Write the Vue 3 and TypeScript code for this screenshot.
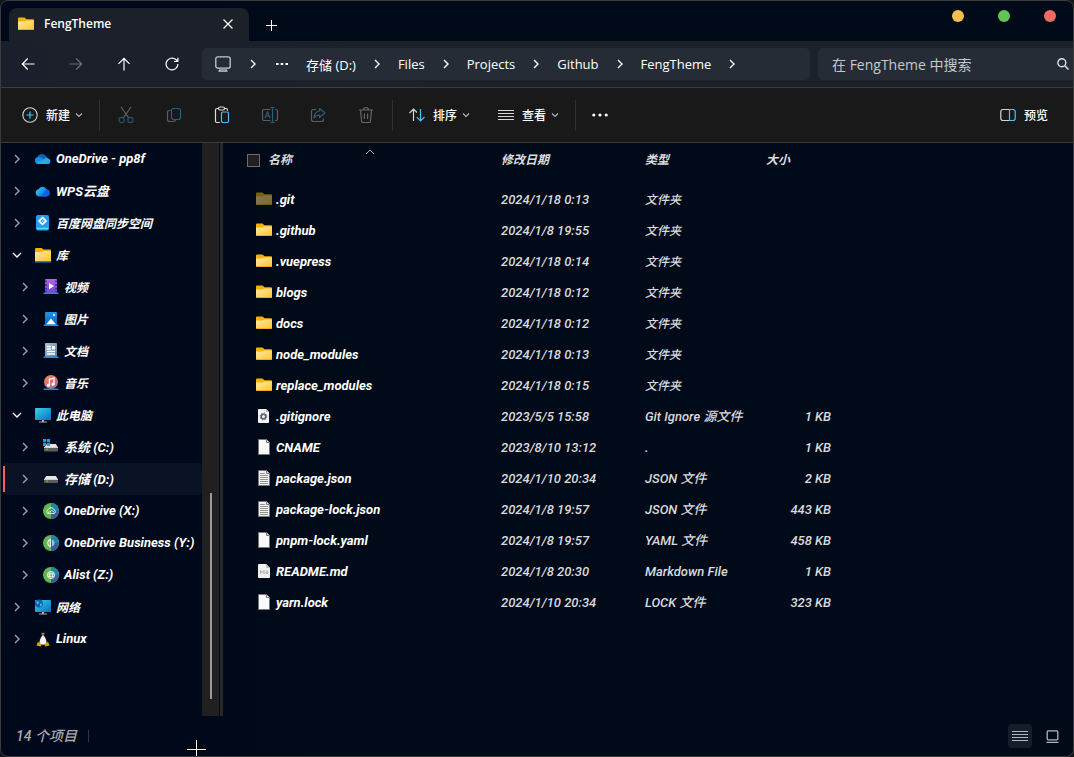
<script setup lang="ts">
import { ref } from 'vue'

interface TreeItem {
  label: string
  icon: string
  level: 0 | 1
  open?: boolean
}

interface FileItem {
  name: string
  icon: string
  date: string
  type: string
  size: string
  hidden?: boolean
}

const crumbs = ['存储 (D:)', 'Files', 'Projects', 'Github', 'FengTheme']

const tree: TreeItem[] = [
  { label: 'OneDrive - pp8f', icon: 'onedrive', level: 0 },
  { label: 'WPS云盘', icon: 'wps', level: 0 },
  { label: '百度网盘同步空间', icon: 'baidu', level: 0 },
  { label: '库', icon: 'library', level: 0, open: true },
  { label: '视频', icon: 'video', level: 1 },
  { label: '图片', icon: 'picture', level: 1 },
  { label: '文档', icon: 'document', level: 1 },
  { label: '音乐', icon: 'music', level: 1 },
  { label: '此电脑', icon: 'computer', level: 0, open: true },
  { label: '系统 (C:)', icon: 'sysdrive', level: 1 },
  { label: '存储 (D:)', icon: 'drive', level: 1 },
  { label: 'OneDrive (X:)', icon: 'mountcloud', level: 1 },
  { label: 'OneDrive Business (Y:)', icon: 'mountbiz', level: 1 },
  { label: 'Alist (Z:)', icon: 'mountweb', level: 1 },
  { label: '网络', icon: 'network', level: 0 },
  { label: 'Linux', icon: 'linux', level: 0 },
]

const files: FileItem[] = [
  { name: '.git', icon: 'folder', date: '2024/1/18 0:13', type: '文件夹', size: '', hidden: true },
  { name: '.github', icon: 'folder', date: '2024/1/8 19:55', type: '文件夹', size: '' },
  { name: '.vuepress', icon: 'folder', date: '2024/1/18 0:14', type: '文件夹', size: '' },
  { name: 'blogs', icon: 'folder', date: '2024/1/18 0:12', type: '文件夹', size: '' },
  { name: 'docs', icon: 'folder', date: '2024/1/18 0:12', type: '文件夹', size: '' },
  { name: 'node_modules', icon: 'folder', date: '2024/1/18 0:13', type: '文件夹', size: '' },
  { name: 'replace_modules', icon: 'folder', date: '2024/1/18 0:15', type: '文件夹', size: '' },
  { name: '.gitignore', icon: 'filegear', date: '2023/5/5 15:58', type: 'Git Ignore 源文件', size: '1 KB' },
  { name: 'CNAME', icon: 'fileblank', date: '2023/8/10 13:12', type: '.', size: '1 KB' },
  { name: 'package.json', icon: 'filetext', date: '2024/1/10 20:34', type: 'JSON 文件', size: '2 KB' },
  { name: 'package-lock.json', icon: 'filetext', date: '2024/1/8 19:57', type: 'JSON 文件', size: '443 KB' },
  { name: 'pnpm-lock.yaml', icon: 'fileblank', date: '2024/1/8 19:57', type: 'YAML 文件', size: '458 KB' },
  { name: 'README.md', icon: 'filemd', date: '2024/1/8 20:30', type: 'Markdown File', size: '1 KB' },
  { name: 'yarn.lock', icon: 'fileblank', date: '2024/1/10 20:34', type: 'LOCK 文件', size: '323 KB' },
]

const tools = [
  { id: 'cut', label: '剪切', off: true },
  { id: 'copy', label: '复制', off: true },
  { id: 'paste', label: '粘贴', off: false },
  { id: 'rename', label: '重命名', off: true },
  { id: 'share', label: '共享', off: true },
  { id: 'trash', label: '删除', off: true },
]

const selected = ref('存储 (D:)')
const query = ref('')
const allChecked = ref(false)

const isHan = (s: string) => /^[\u4e00-\u9fff]+$/.test(s)
</script>

<template>
  <div class="window">
    <svg class="defs" aria-hidden="true">
      <defs>
        <linearGradient id="gFolder" x1="0" y1="0" x2="1" y2="1">
          <stop offset="0" stop-color="#ffe9a2" /><stop offset="1" stop-color="#ffc533" />
        </linearGradient>
        <linearGradient id="gWps" x1="0" y1="0" x2="1" y2="0.6">
          <stop offset="0" stop-color="#35e6c0" /><stop offset="0.5" stop-color="#1c9bf5" /><stop offset="1" stop-color="#0a5be0" />
        </linearGradient>
        <linearGradient id="gScreen" x1="0" y1="0" x2="1" y2="1">
          <stop offset="0" stop-color="#35d3e6" /><stop offset="1" stop-color="#0b6fc4" />
        </linearGradient>
        <linearGradient id="gVideo" x1="0" y1="0" x2="0" y2="1">
          <stop offset="0" stop-color="#b067ee" /><stop offset="1" stop-color="#7a3fd2" />
        </linearGradient>
        <linearGradient id="gPic" x1="0" y1="0" x2="0" y2="1">
          <stop offset="0" stop-color="#1e96e8" /><stop offset="1" stop-color="#0a62b8" />
        </linearGradient>
        <linearGradient id="gMusic" x1="0" y1="0" x2="1" y2="1">
          <stop offset="0" stop-color="#f58a52" /><stop offset="1" stop-color="#b45a9c" />
        </linearGradient>
        <linearGradient id="gDoc" x1="0" y1="0" x2="1" y2="1">
          <stop offset="0" stop-color="#a9c0d8" /><stop offset="1" stop-color="#5f7d9c" />
        </linearGradient>
      </defs>
      <symbol id="i-folder" viewBox="0 0 16 16">
        <path d="M0 2.5Q0 1.5 1 1.5H6.5L8.5 3.3H15Q16 3.3 16 4.3V13H0Z" fill="#f5b105" />
        <path d="M0 5.6H6.6L8.4 4.6H16V13Q16 14 15 14H1Q0 14 0 13Z" fill="url(#gFolder)" />
        <path d="M0 13.3H16Q16 14 15 14H1Q0 14 0 13.3Z" fill="#e8a317" />
      </symbol>
      <symbol id="i-library" viewBox="0 0 16 16">
        <path d="M0 2Q0 1 1 1H6.5L8.5 2.5H15Q16 2.5 16 3.5V13H0Z" fill="#f5b105" />
        <path d="M0 5H6.6L8.4 4H16V14H0Z" fill="url(#gFolder)" />
        <path d="M0 14H16V15.5H0Z" fill="#1686db" />
      </symbol>
      <symbol id="i-onedrive" viewBox="0 0 16 16">
        <path d="M2 8.2A5 5 0 0 1 11.4 5.6L14 9 3 12Z" fill="#0f5fb4" />
        <path d="M3.6 13A3.5 3.5 0 0 1 3.2 6Q5 5.8 7 7L13 12 12 13Z" fill="#1490df" />
        <path d="M11 6.4A4 4 0 0 1 13.4 7.6A2.8 2.8 0 0 1 13.2 13H3.6Q2 13 1 11.6L9.5 8Z" fill="#28a8ea" />
      </symbol>
      <symbol id="i-wps" viewBox="0 0 16 16">
        <path d="M4.5 13.5A3.7 3.7 0 0 1 3.6 6.2A4.4 4.4 0 0 1 11.6 6.2A3.7 3.7 0 0 1 11.8 13.5Z" fill="url(#gWps)" />
        <path d="M6 13.5L11.6 6.6A3.7 3.7 0 0 1 11.8 13.5Z" fill="#0c63e6" />
      </symbol>
      <symbol id="i-baidu" viewBox="0 0 16 16">
        <rect x="1" y="0" width="13" height="15.5" rx="2" fill="#249df0" />
        <path d="M2 13.5H13" stroke="#4fe0ff" stroke-width="1.6" />
        <path d="M7.5 2.6L11 6 7.5 9.4 4 6Z" fill="none" stroke="#fff" stroke-width="1.7" />
        <circle cx="7.5" cy="6" r="1" fill="#8fd4ff" />
      </symbol>
      <symbol id="i-video" viewBox="0 0 16 16">
        <rect x="2" y="0" width="12" height="14" rx="1" fill="url(#gVideo)" />
        <path d="M3 1.5V13M13 1.5V13" stroke="#3c1b78" stroke-width="1.4" stroke-dasharray="1.8 1.8" />
        <path d="M6 4L11 7 6 10.2Z" fill="#fff" />
        <path d="M1 13.6H15L15.8 15H0.2Z" fill="#1b8fe6" />
      </symbol>
      <symbol id="i-picture" viewBox="0 0 16 16">
        <rect x="2" y="1" width="12" height="13" rx="1" fill="url(#gPic)" />
        <path d="M3 13.6L8 7.4 13 13.6Z" fill="#fff" />
        <rect x="10" y="3" width="2" height="2" rx="1" fill="#fff" />
        <path d="M1 13.6H15L15.8 15H0.2Z" fill="#1b8fe6" />
      </symbol>
      <symbol id="i-document" viewBox="0 0 16 16">
        <rect x="2" y="0" width="12" height="14" rx="1" fill="url(#gDoc)" />
        <path d="M4 3.5H8M4 6H8M4 8.5H12M4 11H12" stroke="#fff" stroke-width="1.3" />
        <rect x="9" y="3" width="3" height="3.5" fill="#fff" />
        <path d="M1 13.6H15L15.8 15H0.2Z" fill="#1b8fe6" />
      </symbol>
      <symbol id="i-music" viewBox="0 0 16 16">
        <circle cx="8" cy="7" r="7" fill="url(#gMusic)" />
        <path d="M6.4 10.2V4.2L11 3V9.2" fill="none" stroke="#fff" stroke-width="1.3" />
        <circle cx="5.4" cy="10.2" r="1.5" fill="#fff" /><circle cx="10" cy="9.3" r="1.5" fill="#fff" />
        <path d="M1 13.6H15L15.8 15H0.2Z" fill="#1b8fe6" />
      </symbol>
      <symbol id="i-computer" viewBox="0 0 16 16">
        <rect x="0" y="1" width="16" height="12" rx="0.8" fill="url(#gScreen)" />
        <path d="M7 13H9V14.6H12V15.6H4V14.6H7Z" fill="#a4b0ba" />
      </symbol>
      <symbol id="i-network" viewBox="0 0 16 16">
        <rect x="0" y="1" width="16" height="12" rx="0.8" fill="url(#gScreen)" />
        <circle cx="4" cy="4.4" r="4" fill="#0e5fb0" />
        <path d="M1.4 2.4L4 2.6 3.6 4.8 2 5ZM5 5L7 4.4 6.2 7 5 7.4Z" fill="#4cc2f5" />
        <path d="M7 13H9V14.6H12V15.6H4V14.6H7Z" fill="#a4b0ba" />
      </symbol>
      <symbol id="i-drive" viewBox="0 0 16 16">
        <path d="M3.2 5H12.8L15 8.6H1Z" fill="#e6e6e6" />
        <rect x="1" y="8" width="14" height="4" rx="0.8" fill="#5c5c5c" />
        <path d="M1 8H15V9H1Z" fill="#cfcfcf" />
        <rect x="3.4" y="9.6" width="1.6" height="1.2" fill="#3ddc4c" />
      </symbol>
      <symbol id="i-sysdrive" viewBox="0 0 16 16">
        <path d="M4 5H12.8L15 8.6H1Z" fill="#e6e6e6" />
        <rect x="1" y="8" width="14" height="4.4" rx="0.8" fill="#5c5c5c" />
        <path d="M1 8H15V9H1Z" fill="#cfcfcf" />
        <rect x="3.4" y="9.8" width="1.6" height="1.2" fill="#3ddc4c" />
        <path d="M0 0H3.2V3.2H0ZM3.9 0H7.1V3.2H3.9ZM0 3.9H3.2V7.1H0ZM3.9 3.9H7.1V7.1H3.9Z" fill="#1a9af2" />
      </symbol>
      <symbol id="i-mount" viewBox="0 0 16 16">
        <circle cx="8" cy="8" r="8" fill="#62b556" />
        <path d="M8 0A8 8 0 0 1 16 8H8Z" fill="#1d86ab" />
        <path d="M16 8A8 8 0 0 1 8 16V8Z" fill="#3a6098" />
      </symbol>
      <symbol id="i-mountcloud" viewBox="0 0 16 16">
        <use href="#i-mount" />
        <path d="M5 10.4A1.9 1.9 0 0 1 5 6.8A3.2 3.2 0 0 1 11 6.8A1.9 1.9 0 0 1 11.2 10.4Z" fill="none" stroke="#e3f2e8" stroke-width="1" />
        <path d="M5 9.6L9 7.6 11.4 9.4" fill="none" stroke="#e3f2e8" stroke-width="0.9" />
      </symbol>
      <symbol id="i-mountbiz" viewBox="0 0 16 16">
        <use href="#i-mount" />
        <path d="M7.4 4.4V11.6A3.8 3.8 0 0 1 7.4 4.4Z" fill="none" stroke="#e3f2e8" stroke-width="1.2" />
        <path d="M9 4.4V11.6A3.8 3.8 0 0 0 9 4.4Z" fill="#9fc3dc" />
      </symbol>
      <symbol id="i-mountweb" viewBox="0 0 16 16">
        <use href="#i-mount" />
        <g fill="none" stroke="#e3f2e8">
          <circle cx="8" cy="8" r="3.6" /><ellipse cx="8" cy="8" rx="1.5" ry="3.6" /><path d="M4.6 7H11.4M4.6 9.2H11.4" />
        </g>
      </symbol>
      <symbol id="i-linux" viewBox="0 0 16 16">
        <path d="M8 0.2C6 0.2 5.8 2 6 4C5.8 6 3.2 8.6 3.4 12L8 15 12.6 12C12.8 8.6 10.2 6 10 4C10.2 2 10 0.2 8 0.2Z" fill="#15171b" />
        <path d="M8 4.6C6.6 4.6 4.6 9 4.6 11.4C4.6 14.4 11.4 14.4 11.4 11.4C11.4 9 9.4 4.6 8 4.6Z" fill="#f4f4f4" />
        <path d="M6.8 2.4H7.6M8.4 2.4H9.2" stroke="#fff" />
        <path d="M6.4 3.6H9.6L8 5.2Z" fill="#eaa90c" />
        <path d="M3 10.8L6.8 13.6 5.6 15.6 1.4 14.6ZM13 10.8L9.2 13.6 10.4 15.6 14.6 14.6Z" fill="#dba00c" />
      </symbol>
      <symbol id="i-fileblank" viewBox="0 0 16 16">
        <path d="M2.5 0.5H10.5L13.5 3.5V15.5H2.5Z" fill="#fafafa" stroke="#777" />
        <path d="M10.5 0.5V3.5H13.5" fill="#ddd" stroke="#777" />
      </symbol>
      <symbol id="i-filetext" viewBox="0 0 16 16">
        <path d="M2.5 0.5H10.5L13.5 3.5V15.5H2.5Z" fill="#f2f2f2" stroke="#777" />
        <path d="M10.5 0.5V3.5H13.5" fill="#ddd" stroke="#777" />
        <path d="M4 3.5H9M4 5.5H12M4 7.5H12M4 9.5H12M4 11.5H12M4 13.5H12" stroke="#929292" />
      </symbol>
      <symbol id="i-filegear" viewBox="0 0 16 16">
        <path d="M2 2Q2 1 3 1H10L13 4V14Q13 15 12 15H3Q2 15 2 14Z" fill="#f5f5f5" />
        <path d="M10 1V4H13Z" fill="#b9bdc2" />
        <circle cx="7.5" cy="8.5" r="2.3" fill="none" stroke="#53636d" stroke-width="1.6" />
        <circle cx="7.5" cy="8.5" r="3.4" fill="none" stroke="#53636d" stroke-width="1" stroke-dasharray="1.3 1.37" />
      </symbol>
      <symbol id="i-filemd" viewBox="0 0 16 16">
        <path d="M2 2Q2 1 3 1H10L14 5V14Q14 15 13 15H3Q2 15 2 14Z" fill="#f0f0f0" />
        <path d="M10 1V5H14Z" fill="#c4c4c4" />
        <path d="M4.5 11V7.5L6.2 9.5 8 7.5V11M11 7V10.5M9.4 9L11 10.8 12.6 9" fill="none" stroke="#a6a6a6" />
      </symbol>
      <symbol id="i-right" viewBox="0 0 8 10"><path d="M2 1L6 5 2 9" fill="none" stroke="currentColor" stroke-width="1.4" /></symbol>
      <symbol id="i-down" viewBox="0 0 8 8"><path d="M1 2.5L4 5.5 7 2.5" fill="none" stroke="currentColor" stroke-width="1.1" /></symbol>
      <symbol id="i-cut" viewBox="0 0 18 18">
        <g fill="none"><path d="M4 1L11.8 12M14 1L6.2 12" stroke="#65686b" stroke-width="1.1" /><circle cx="4.6" cy="14" r="2.6" stroke="#25526d" stroke-width="1.2" /><circle cx="13.4" cy="14" r="2.6" stroke="#25526d" stroke-width="1.2" /></g>
      </symbol>
      <symbol id="i-copy" viewBox="0 0 18 18">
        <g fill="none" stroke-width="1.2"><path d="M5.5 4.5H4.5Q2.5 4.5 2.5 6.5V13.5Q2.5 15.5 4.5 15.5H8.5Q10.5 15.5 10.5 13.8" stroke="#5c5f62" /><rect x="6.5" y="2.5" width="9" height="11" rx="2" stroke="#25607d" /></g>
      </symbol>
      <symbol id="i-paste" viewBox="0 0 18 18">
        <g fill="none" stroke-width="1.2"><path d="M6.8 16.5H4Q2.5 16.5 2.5 15V4Q2.5 2.5 4 2.5H5.5M11.5 2.5H13Q14.5 2.5 14.5 4V4.8" stroke="#dedede" /><rect x="5.5" y="1" width="6" height="3" rx="1.5" stroke="#dedede" /><rect x="8.5" y="6" width="7" height="10.5" rx="1.2" stroke="#4cbdf6" /></g>
      </symbol>
      <symbol id="i-rename" viewBox="0 0 18 18">
        <g fill="none" stroke-width="1.2"><path d="M9.5 3.5H3Q1.5 3.5 1.5 5V13Q1.5 14.5 3 14.5H9.5M14 3.5H15Q16.5 3.5 16.5 5V13Q16.5 14.5 15 14.5H14" stroke="#5c5f62" /><path d="M4 12L6.5 6 9 12M5 10H8M11.5 1.5V16.5M9.5 1.5H13.5M9.5 16.5H13.5" stroke="#25607d" /></g>
      </symbol>
      <symbol id="i-share" viewBox="0 0 18 18">
        <g fill="none" stroke-width="1.2"><path d="M7 3.5H4.5Q2.5 3.5 2.5 5.5V13.5Q2.5 15.5 4.5 15.5H12.5Q14.5 15.5 14.5 13.5V12.5" stroke="#5c5f62" /><path d="M10.5 2.5L16 7 10.5 11.5V9Q7 9 5 12Q5.5 5.5 10.5 5Z" stroke="#25607d" stroke-linejoin="round" /></g>
      </symbol>
      <symbol id="i-trash" viewBox="0 0 18 18">
        <path d="M2 4H16M6.5 4Q6.5 1.5 9 1.5T11.5 4M3.5 4L4.6 15.2Q4.7 16.5 6 16.5H12Q13.3 16.5 13.4 15.2L14.5 4M7.4 7.5V13M10.6 7.5V13" fill="none" stroke="#65686b" stroke-width="1.2" />
      </symbol>
    </svg>

    <header class="titlebar">
      <div class="tab">
        <svg class="ico"><use href="#i-folder" /></svg>
        <span class="tab-title">FengTheme</span>
        <button class="tab-close" aria-label="关闭标签页">
          <svg width="10" height="10" viewBox="0 0 10 10"><path d="M0.5 0.5L9.5 9.5M9.5 0.5L0.5 9.5" stroke="currentColor" stroke-width="1.2" /></svg>
        </button>
      </div>
      <button class="tab-new" aria-label="新建标签页">
        <svg width="11" height="11" viewBox="0 0 11 11"><path d="M5.5 0V11M0 5.5H11" stroke="currentColor" /></svg>
      </button>
      <div class="lights">
        <button class="light yellow" aria-label="最小化"></button>
        <button class="light green" aria-label="最大化"></button>
        <button class="light red" aria-label="关闭"></button>
      </div>
    </header>

    <nav class="navbar" aria-label="导航">
      <div class="nav-buttons">
        <button aria-label="后退"><svg width="14" height="14" viewBox="0 0 14 14"><path d="M13.5 7H1.5M6.8 1.5L1.3 7 6.8 12.5" fill="none" stroke="currentColor" stroke-width="1.2" /></svg></button>
        <button aria-label="前进" disabled><svg width="14" height="14" viewBox="0 0 14 14"><path d="M0.5 7H12.5M7.2 1.5L12.7 7 7.2 12.5" fill="none" stroke="currentColor" stroke-width="1.2" /></svg></button>
        <button aria-label="向上"><svg width="14" height="14" viewBox="0 0 14 14"><path d="M7 13.5V1.5M1.5 6.8L7 1.3 12.5 6.8" fill="none" stroke="currentColor" stroke-width="1.2" /></svg></button>
        <button aria-label="刷新"><svg width="14" height="14" viewBox="0 0 14 14"><path d="M12.9 7A5.9 5.9 0 1 1 10.8 2.5L12.7 4.3M12.9 0.8V4.5H9" fill="none" stroke="currentColor" stroke-width="1.2" /></svg></button>
      </div>
      <div class="address">
        <button class="device" aria-label="此电脑">
          <svg width="16" height="16" viewBox="0 0 16 16"><rect x="0.8" y="0.8" width="14.4" height="11.4" rx="2" fill="none" stroke="#c9cbce" stroke-width="1.3" /><path d="M5 12.5V14.5M11 12.5V14.5M3.5 15H12.5" stroke="#c9cbce" stroke-width="1.3" /><path d="M5 12.5H11V14.5H5Z" fill="#8c9094" /></svg>
        </button>
        <svg class="sep"><use href="#i-right" /></svg>
        <button class="dots" aria-label="更多路径">
          <svg width="12" height="4" viewBox="0 0 12 4"><path d="M0 1H2.6V3H0ZM4.7 1H7.3V3H4.7ZM9.4 1H12V3H9.4Z" fill="currentColor" /></svg>
        </button>
        <template v-for="c in crumbs" :key="c">
          <button class="crumb">{{ c }}</button>
          <svg class="sep"><use href="#i-right" /></svg>
        </template>
      </div>
      <label class="search">
        <input v-model="query" type="text" placeholder="在 FengTheme 中搜索" aria-label="在 FengTheme 中搜索" />
        <svg width="12" height="12" viewBox="0 0 12 12"><circle cx="4.8" cy="4.8" r="4" fill="none" stroke="#e2e4e6" stroke-width="1.4" /><path d="M7.8 7.8L11.5 11.5" stroke="#e2e4e6" stroke-width="1.5" /></svg>
      </label>
    </nav>

    <div class="toolbar" role="toolbar" aria-label="命令栏">
      <button class="tool new">
        <svg class="ico" viewBox="0 0 16 16"><circle cx="8" cy="8" r="7.2" fill="none" stroke="#d6d6d6" stroke-width="1.1" /><path d="M8 4.5V11.5M4.5 8H11.5" stroke="#4cc2ff" stroke-width="1.2" /></svg>
        <span>新建</span>
        <svg class="caret"><use href="#i-down" /></svg>
      </button>
      <i class="rule"></i>
      <div class="tool-group">
        <button v-for="t in tools" :key="t.id" class="tool-icon" :aria-label="t.label" :disabled="t.off">
          <svg width="18" height="18"><use :href="'#i-' + t.id" /></svg>
        </button>
      </div>
      <i class="rule"></i>
      <button class="tool sort">
        <svg class="ico" viewBox="0 0 16 16"><g fill="none" stroke-width="1.2"><path d="M4.5 14V2M0.5 6L4.5 2 8 5.5" stroke="#d6d6d6" /><path d="M11.5 2V14M7.8 10.2L11.5 14 15.5 10" stroke="#4cc2ff" /></g></svg>
        <span>排序</span>
        <svg class="caret"><use href="#i-down" /></svg>
      </button>
      <button class="tool view">
        <svg class="ico" viewBox="0 0 16 16"><path d="M0 3.5H16M0 6.5H16M0 9.5H16M0 12.5H16" stroke="#d6d6d6" /></svg>
        <span>查看</span>
        <svg class="caret"><use href="#i-down" /></svg>
      </button>
      <i class="rule"></i>
      <button class="tool-icon" aria-label="更多">
        <svg width="16" height="4" viewBox="0 0 16 4"><g fill="#fff"><circle cx="1.8" cy="2" r="1.6" /><circle cx="8" cy="2" r="1.6" /><circle cx="14.2" cy="2" r="1.6" /></g></svg>
      </button>
      <button class="tool preview">
        <svg class="ico" viewBox="0 0 16 16"><g fill="none" stroke-width="1.2"><path d="M9 2.5H3Q0.8 2.5 0.8 4.7V11.3Q0.8 13.5 3 13.5H9" stroke="#d6d6d6" /><path d="M9.5 2.5H13Q15.2 2.5 15.2 4.7V11.3Q15.2 13.5 13 13.5H9.5Z" stroke="#4cc2ff" /></g></svg>
        <span>预览</span>
      </button>
    </div>

    <div class="body">
      <aside class="sidebar">
        <ul class="tree">
          <li v-for="item in tree" :key="item.label">
            <button
              class="node"
              :class="{ child: item.level === 1, selected: item.label === selected, han: isHan(item.label), open: item.open }"
              @click="selected = item.label"
            >
              <svg class="twist"><use href="#i-right" /></svg>
              <svg class="ico"><use :href="'#i-' + item.icon" /></svg>
              <span>{{ item.label }}</span>
            </button>
          </li>
        </ul>
        <div class="scroll"><div class="thumb"></div></div>
      </aside>

      <main class="content">
        <table>
          <thead>
            <tr>
              <th class="c-name">
                <input v-model="allChecked" type="checkbox" aria-label="全选" />
                <span>名称</span>
                <svg class="ascending" width="10" height="6" viewBox="0 0 10 6"><path d="M1 5L5 1 9 5" fill="none" stroke="#a8acb2" /></svg>
              </th>
              <th class="c-date">修改日期</th>
              <th class="c-type">类型</th>
              <th class="c-size">大小</th>
              <th></th>
            </tr>
          </thead>
          <tbody>
            <tr v-for="f in files" :key="f.name">
              <td class="name" :class="{ faded: f.hidden }">
                <svg class="ico"><use :href="'#i-' + f.icon" /></svg>
                <span>{{ f.name }}</span>
              </td>
              <td>{{ f.date }}</td>
              <td :class="{ han: isHan(f.type) }">{{ f.type }}</td>
              <td class="size">{{ f.size }}</td>
              <td></td>
            </tr>
          </tbody>
        </table>
      </main>
    </div>

    <footer class="status">
      <span class="count">14 个项目</span>
      <div class="modes">
        <button class="mode active" aria-label="详细信息">
          <svg width="16" height="12" viewBox="0 0 16 12"><path d="M0 1.5H16M0 4.5H16M0 7.5H16M0 10.5H16" stroke="#b4b7bb" /></svg>
        </button>
        <button class="mode" aria-label="大图标">
          <svg width="13" height="13" viewBox="0 0 13 13"><rect x="1.2" y="0.8" width="10.6" height="9" rx="1" fill="none" stroke="#b4b7bb" stroke-width="1.3" /><path d="M0.5 12.3H12.5" stroke="#b4b7bb" stroke-width="1.3" /></svg>
        </button>
      </div>
    </footer>

    <svg class="pointer" width="20" height="20" viewBox="0 0 20 20" aria-hidden="true">
      <path d="M10.5 0V20M0 10.5H20" stroke="#000" stroke-width="3" /><path d="M10.5 1V20M1 10.5H20" stroke="#fff" />
    </svg>
  </div>
</template>

<style>
body {
  margin: 0;
  background: #14161a;
}
</style>

<style scoped>
.window {
  position: relative;
  box-sizing: border-box;
  min-height: 100vh;
  display: flex;
  flex-direction: column;
  overflow: hidden;
  border: 1px solid #3b3b3b;
  border-radius: 8px;
  background: linear-gradient(90deg, #00081c, #000a18 30%, #000a18);
  color: #fff;
  font: 14px "Open Sans", "Noto Sans CJK SC", sans-serif;
}
.defs {
  position: absolute;
  width: 0;
  height: 0;
}
button {
  display: flex;
  align-items: center;
  justify-content: center;
  padding: 0;
  border: 0;
  background: none;
  color: inherit;
  font: inherit;
  white-space: nowrap;
}
svg {
  flex: none;
  display: block;
}
.ico {
  width: 16px;
  height: 16px;
}
.titlebar {
  height: 40px;
  display: flex;
  align-items: flex-end;
  padding-left: 8px;
}
.tab {
  box-sizing: border-box;
  width: 240px;
  height: 33px;
  display: flex;
  align-items: center;
  gap: 10px;
  padding: 0 16px 2px 9px;
  border-radius: 8px 8px 0 0;
  background: #1b2029;
}
.tab-title {
  flex: 1;
  font-size: 12px;
  font-weight: 600;
}
.tab-new {
  width: 44px;
  height: 32px;
}
.lights {
  align-self: flex-start;
  display: flex;
  gap: 34px;
  margin-left: auto;
  padding: 9px 17px 0 0;
}
.light {
  width: 12px;
  height: 12px;
  border-radius: 50%;
}
.yellow { background: #f4bd50; }
.green { background: #61c555; }
.red { background: #ed6b60; }

.navbar {
  height: 46px;
  display: flex;
  align-items: center;
  padding-left: 3px;
  background: linear-gradient(90deg, #1b1f2b, #1b2229 40%);
  border-bottom: 1px solid #3d3d3d;
}
.nav-buttons {
  display: flex;
}
.nav-buttons button {
  width: 48px;
  height: 32px;
}
.nav-buttons button:disabled {
  color: #6a6e76;
}
.address,
.search {
  box-sizing: border-box;
  height: 32px;
  display: flex;
  align-items: center;
  border-radius: 5px;
  background: #262c35;
}
.address {
  flex: 1;
  margin: 0 8px 0 6px;
  padding-left: 12px;
  font-size: 13px;
}
.device {
  width: 18px;
}
.sep {
  width: 8px;
  height: 10px;
  margin: 0 17px;
}
.dots {
  width: 12px;
  margin: 0 18px 0 2px;
}
.search {
  width: 255px;
  padding: 0 4px 0 14px;
  border-radius: 5px 0 0 5px;
}
.search input {
  flex: 1;
  min-width: 0;
  padding: 0;
  border: 0;
  outline: 0;
  background: none;
  color: #fff;
  font: inherit;
}
.search input::placeholder {
  color: #c6c9cd;
  opacity: 1;
}

.toolbar {
  height: 54px;
  display: flex;
  align-items: center;
  padding-left: 16px;
  background: #191919;
  border-bottom: 1px solid #3b3b3b;
  font-size: 12px;
  font-weight: 500;
}
.tool {
  height: 40px;
}
.tool span {
  margin-left: 8px;
}
.caret {
  width: 8px;
  height: 8px;
  margin-left: 5px;
  color: #b8b8b8;
}
.new { padding: 0 16px 0 5px; }
.sort { padding: 0 14px 0 16px; }
.view { padding: 0 16px 0 14px; }
.preview { margin-left: auto; padding-right: 25px; }
.rule {
  width: 1px;
  height: 31px;
  background: #303030;
}
.tool-group {
  display: flex;
  padding: 0 2px;
}
.tool-icon {
  width: 48px;
  height: 40px;
}

.body {
  flex: 1;
  display: flex;
  font-family: Roboto, "Noto Sans CJK SC", sans-serif;
  font-size: 13px;
  font-style: italic;
}
.sidebar {
  flex: none;
  display: flex;
  width: 218px;
  padding-right: 1px;
  border-right: 3px solid #282828;
}
.tree {
  flex: 1;
  min-width: 0;
  margin: 0;
  padding: 0 0 0 2px;
  list-style: none;
}
.node {
  position: relative;
  width: 100%;
  height: 32px;
  justify-content: flex-start;
  padding-left: 10px;
  border-radius: 4px;
  overflow: hidden;
  font-weight: 700;
}
.child {
  padding-left: 18px;
}
.twist {
  width: 8px;
  height: 10px;
  margin-right: 14px;
  color: #9da0a6;
}
.open .twist {
  transform: rotate(90deg);
  color: #fff;
}
.node span {
  margin-left: 5px;
  padding-bottom: 2px;
}
.han {
  font-size: 12px;
}
.selected {
  background: #0a1226;
}
.selected::before {
  content: "";
  position: absolute;
  left: 0;
  top: 3px;
  bottom: 3px;
  width: 2px;
  background: #ff5f63;
}
.scroll {
  width: 17px;
  display: flex;
  justify-content: center;
  align-items: flex-end;
  background: #202020;
}
.thumb {
  width: 2px;
  height: 36%;
  margin-bottom: 17px;
  background: #9a9a9a;
}

.content {
  flex: 1;
  min-width: 0;
}
table {
  width: 100%;
  table-layout: fixed;
  border-collapse: collapse;
  color: #d9dbde;
  font-weight: 500;
}
th {
  position: relative;
  height: 41px;
  padding: 0;
  box-sizing: border-box;
  padding-bottom: 10px;
  text-align: left;
  font-size: 12px;
  font-weight: 700;
}
.c-name { width: 278px; }
.c-date { width: 144px; }
.c-type { width: 121px; }
.c-size { width: 65px; }
th input {
  appearance: none;
  box-sizing: border-box;
  width: 13px;
  height: 13px;
  margin: 0 8px 0 24px;
  border: 1px solid #6c6c6c;
  background: #202020;
  vertical-align: -3px;
}
.ascending {
  position: absolute;
  left: 142px;
  top: 6px;
}
td {
  height: 31px;
  padding: 0;
  line-height: 20px;
  white-space: nowrap;
}
.name {
  color: #fff;
  font-weight: 700;
}
.name .ico {
  display: inline-block;
  margin: 0 4px 0 33px;
  vertical-align: -3px;
}
.faded .ico {
  opacity: 0.5;
}
.size {
  text-align: right;
}

.status {
  height: 40px;
  display: flex;
  align-items: center;
  justify-content: space-between;
  padding: 0 9px 0 15px;
  font-family: Roboto, "Noto Sans CJK SC", sans-serif;
}
.count {
  padding-right: 11px;
  border-right: 1px solid #30384a;
  color: #a6a8ac;
  font-style: italic;
  font-weight: 500;
  line-height: 12px;
}
.modes {
  display: flex;
  gap: 8px;
}
.mode {
  width: 24px;
  height: 24px;
  border-radius: 4px;
}
.active {
  background: #141d2b;
}
.pointer {
  position: absolute;
  left: 185px;
  bottom: -3px;
}
</style>
